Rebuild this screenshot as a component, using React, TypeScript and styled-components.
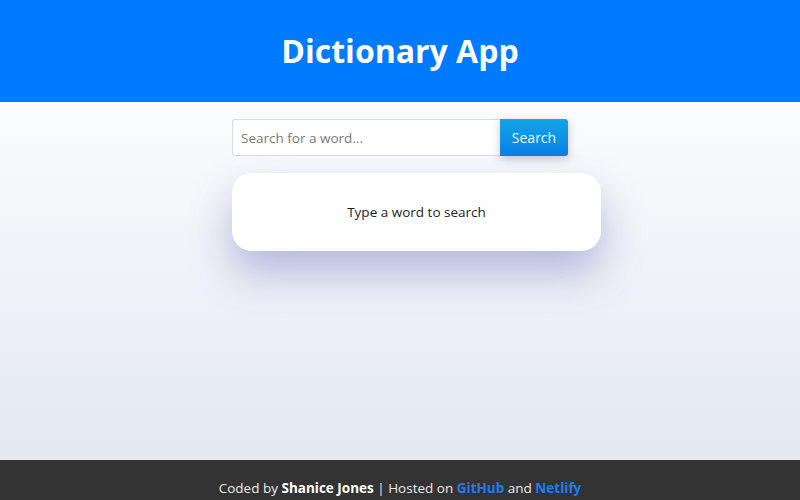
import styled, { createGlobalStyle } from "styled-components";
import { useState } from "react";

const GlobalStyle = createGlobalStyle`
  body {
    margin: 0;
    font-family: "Open Sans", "DejaVu Sans", sans-serif;
    background: #e4e8f1;
  }
  * {
    box-sizing: border-box;
  }
`;

const Page = styled.div`
  display: flex;
  flex-direction: column;
`;

const Header = styled.header`
  height: 102px;
  background: #007bff;
  display: flex;
  align-items: center;
  justify-content: center;
  border-bottom: 1px solid #1d72c8;
`;

const Title = styled.h1`
  margin: 0;
  color: #fff;
  font-size: 32px;
  font-weight: 700;
`;

const Main = styled.main`
  height: 358px;
  background: linear-gradient(180deg, #fbfcfd 0%, #e3e8f1 100%);
  display: flex;
  justify-content: center;
  padding-top: 17px;
`;

const Column = styled.div`
  width: 336px;
  display: flex;
  flex-direction: column;
  gap: 17px;
`;

const Form = styled.form`
  display: flex;
  height: 37px;
`;

const Input = styled.input`
  flex: 1;
  border: 1px solid #d8dbe0;
  border-right: none;
  border-radius: 3px 0 0 3px;
  padding: 0 8px;
  font-family: inherit;
  font-size: 13.5px;
  color: #333;
  background: #fff;
  outline: none;

  &::placeholder {
    color: #7a7a7a;
  }
`;

const Button = styled.button`
  width: 68px;
  border: none;
  border-radius: 0 3px 3px 0;
  background: linear-gradient(180deg, #12a6e6 0%, #0a7fe6 100%);
  color: #f2f8ff;
  font-family: inherit;
  font-size: 14px;
  cursor: pointer;
  box-shadow: 0 3px 8px rgba(20, 40, 90, 0.25);
`;

const Card = styled.section`
  width: 369px;
  flex-shrink: 0;
  align-self: flex-start;
  height: 78px;
  background: #fff;
  border-radius: 20px;
  display: flex;
  align-items: center;
  justify-content: center;
  font-size: 13.5px;
  color: #1e1e1e;
  box-shadow: 0 22px 42px rgba(100, 100, 185, 0.42);
`;

const Footer = styled.footer`
  background: #333333;
  color: #eaeaea;
  font-size: 13.5px;
  text-align: center;
  padding: 19px 0 20px;
`;

const Strong = styled.strong`
  color: #fff;
`;

const Link = styled.a`
  color: #1a7ef0;
  font-weight: 700;
  text-decoration: none;
`;

export default function App() {
  const [word, setWord] = useState("");

  return (
    <Page>
      <GlobalStyle />
      <Header>
        <Title>Dictionary App</Title>
      </Header>
      <Main>
        <Column>
          <Form onSubmit={(e) => e.preventDefault()}>
            <Input
              placeholder="Search for a word..."
              value={word}
              onChange={(e) => setWord(e.target.value)}
            />
            <Button type="submit">Search</Button>
          </Form>
          <Card>Type a word to search</Card>
        </Column>
      </Main>
      <Footer>
        Coded by <Strong>Shanice Jones</Strong> | Hosted on{" "}
        <Link href="#">GitHub</Link> and <Link href="#">Netlify</Link>
      </Footer>
    </Page>
  );
}
